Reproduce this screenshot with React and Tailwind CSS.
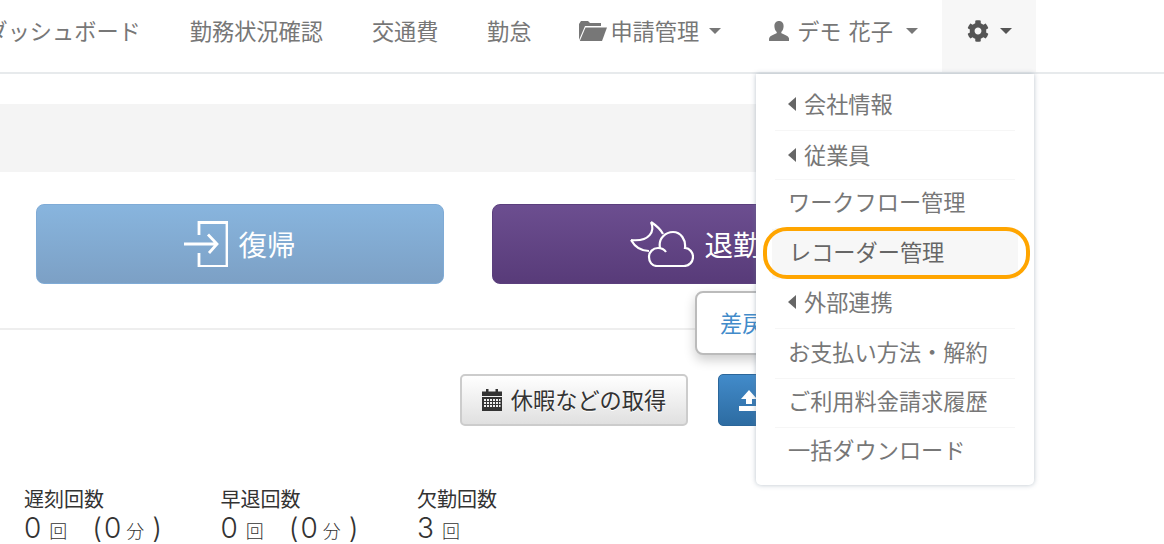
import React from "react";
import { FaCog } from "react-icons/fa";

const font = { fontFamily: '"Noto Sans CJK JP", "Noto Sans", sans-serif' };

const Caret = ({ c = "border-t-[#777]" }) => (
  <span className={`inline-block w-0 h-0 border-x-[6px] border-x-transparent border-t-[6px] ${c}`} />
);
const LeftCaret = () => (
  <span className="inline-block w-0 h-0 border-y-[7px] border-y-transparent border-r-[8px] border-r-[#666] mr-[8px]" />
);

const FolderIcon = () => (
  <svg width="28" height="20" viewBox="0 0 28 20" fill="#777" className="mr-[3px]">
    <path d="M0 19V3l2-3h7l2 2h11v3H6z" />
    <path d="M6.500 6.500H28L23 20H0.800z" />
  </svg>
);

const UserIcon = () => (
  <svg width="20" height="20" viewBox="0 0 20 20" fill="#777">
    <path d="M10 0c3 0 4.600 2.200 4.600 5.200 0 2.200-.9 4.300-2.100 5.500-.4.500-.3 1.500.5 1.900 2.800 1.200 6.200 2.400 6.900 4.300.2.800.2 1.900.1 3.100H.1c-.1-1.200-.1-2.300.1-3.100.7-1.900 4-3.100 6.800-4.300.9-.4 1-1.400.5-1.900C6.300 9.500 5.400 7.400 5.400 5.200 5.400 2.200 7 0 10 0z" />
  </svg>
);

const CalendarIcon = () => (
  <svg width="20" height="22" viewBox="0 0 20 22" fill="#333">
    <path d="M4 0h2.500v3H4zM13.500 0H16v3h-2.500zM0 2.500h20V7H0z" />
    <path fillRule="evenodd" d="M0 8h20v14H0zM2 10v2h2v-2zM5 10v2h2v-2zM8 10v2h2v-2zM11 10v2h2v-2zM14 10v2h2v-2zM17 10v2h1.500v-2zM2 13v2h2v-2zM5 13v2h2v-2zM8 13v2h2v-2zM11 13v2h2v-2zM14 13v2h2v-2zM17 13v2h1.500v-2zM2 16v2h2v-2zM5 16v2h2v-2zM8 16v2h2v-2zM11 16v2h2v-2zM14 16v2h2v-2zM17 16v2h1.500v-2z" />
  </svg>
);

const LoginIcon = () => (
  <svg width="44" height="46" viewBox="0 0 44 46" fill="none" stroke="#fff" strokeWidth="2.800">
    <path d="M15 14V1.500h28v44H15V32" />
    <path d="M0 23h32M24 13.500 33 23l-8 9" />
  </svg>
);

const MoonCloudIcon = () => (
  <svg width="64" height="46" viewBox="0 0 64 46" fill="none" stroke="#fff" strokeWidth="2.200">
    <path d="M21 1C25 10 20 21 1 19M21 1C27 5 31 9 33 13M1 19C5 26 12 30 19 30" />
    <path d="M27 45C22 45 19 41 19 36C19 31 23 27 28 27C31 27 34 28 36 31" />
    <path d="M30 27C28 17 36 11 43 11C51 11 56 19 55 27C60 27 63 32 63 36C63 41 59 45 54 45H27" />
  </svg>
);

const UploadIcon = () => (
  <svg width="20" height="22" viewBox="0 0 20 22" fill="#fff">
    <path d="M10 1 18 10h-5v5H7v-5H2zM0 17h20v5H0z" />
  </svg>
);

const items = [
  { t: "会社情報", sub: true, h: "h-[49px]" },
  { t: "従業員", sub: true, h: "h-[49px]", low: true },
  { t: "ワークフロー管理", h: "h-[49px]" },
  { t: "レコーダー管理", active: true, h: "h-[50px]" },
  { t: "外部連携", sub: true, h: "h-[50px]" },
  { t: "お支払い方法・解約", h: "h-[50px]" },
  { t: "ご利用料金請求履歴", h: "h-[49px]" },
  { t: "一括ダウンロード", h: "h-[48px]", last: true },
];

const Stat = ({ label, n, extra }) => (
  <div className="w-[196.500px] text-[#333]">
    <div className="text-[20px] leading-[28px]">{label}</div>
    <div className="flex items-baseline text-[28px] leading-[31px] font-light font-['Inter',sans-serif]">
      <span>{n}</span>
      <span className="text-[18px] ml-[8px] font-['Noto_Sans_CJK_JP',sans-serif]">回</span>
      {extra && (
        <>
          <span className="ml-[25px]">(</span>
          <span className="ml-[2px]">0</span>
          <span className="text-[18px] ml-[5px] font-['Noto_Sans_CJK_JP',sans-serif]">分</span>
          <span className="ml-[8px]">)</span>
        </>
      )}
    </div>
  </div>
);

export default function App() {
  return (
    <div className="relative w-[1164px] h-[544px] overflow-hidden bg-white" style={font}>
      <nav className="h-[74px] border-b-2 border-[#e7eaec] flex text-[22.200px] text-[#777] whitespace-nowrap ml-[-39px] w-[1203px]">
        <a className="px-[24.500px] flex items-center h-[72px] pb-[10px]">ダッシュボード</a>
        <a className="px-[24.500px] flex items-center h-[72px] pb-[10px]">勤務状況確認</a>
        <a className="px-[24.500px] flex items-center h-[72px] pb-[10px]">交通費</a>
        <a className="px-[24px] flex items-center h-[72px] pb-[10px]">勤怠</a>
        <a className="px-[24px] flex items-center h-[72px] pb-[10px]">
          <FolderIcon />
          申請管理
          <span className="ml-[10px] flex"><Caret /></span>
        </a>
        <a className="px-[24px] flex items-center h-[72px] pb-[10px]">
          <UserIcon />
          <span className="ml-[8px] [word-spacing:2px]">デモ 花子</span>
          <span className="ml-[13px] flex"><Caret /></span>
        </a>
        <a className="pl-[25px] pr-[24px] flex items-center h-[72px] pb-[10px] bg-[#f7f7f7]">
          <FaCog className="w-[22px] h-[22px] text-[#555]" />
          <span className="ml-[11px] flex"><Caret c="border-t-[#555]" /></span>
        </a>
      </nav>

      <div className="w-[1000px]">
        <div className="mt-[30px] h-[68px] bg-[#f4f4f4]" />

        <div className="mt-[32px] pl-[36px] flex gap-[48px]">
          <div className="w-[408px] h-[80px] rounded-[8px] border border-[#7fabd6] bg-gradient-to-b from-[#88b5de] to-[#7ca0c5] flex items-center justify-center text-white text-[28.500px]">
            <LoginIcon />
            <span className="ml-[10px]">復帰</span>
          </div>
          <div className="w-[408px] h-[80px] rounded-[8px] border border-[#5b3f7d] bg-gradient-to-b from-[#6c4e90] to-[#583b79] flex items-center justify-center text-white text-[28.500px]">
            <MoonCloudIcon />
            <span className="ml-[10px]">退勤</span>
          </div>
        </div>

        <div className="mt-[44px] border-t-2 border-[#eeeeee]" />

        <div className="mt-[44px] pl-[460px] flex gap-[30px]">
          <div className="w-[228px] h-[52px] rounded-[5px] border-2 border-[#cccccc] bg-gradient-to-b from-[#ffffff] to-[#e0e0e0] flex items-center justify-center text-[#333] text-[22.200px] [text-shadow:0_1px_0_#fff]">
            <CalendarIcon />
            <span className="ml-[9px]">休暇などの取得</span>
          </div>
          <div className="w-[227px] h-[52px] rounded-[5px] border border-[#2b669a] bg-gradient-to-b from-[#428bca] to-[#2d6ca2] flex items-center pl-[20px]">
            <UploadIcon />
          </div>
        </div>

        <div className="mt-[59px] pl-[24px] flex">
          <Stat label="遅刻回数" n="0" extra />
          <Stat label="早退回数" n="0" extra />
          <Stat label="欠勤回数" n="3" />
        </div>
      </div>

      {/* popover under the dropdown */}
      <div className="absolute left-[695px] top-[291px] w-[200px] h-[64px] rounded-[8px] border-2 border-[#bbbbbb] bg-white shadow-[0_5px_12px_rgba(0,0,0,0.2)] flex items-center pl-[23px] text-[22.200px] text-[#428bca]">
        差戻し
      </div>

      {/* dropdown menu */}
      <div className="absolute left-[756px] top-[74px] w-[278px] h-[411px] bg-white rounded-b-[5px] shadow-[0_0_5px_rgba(100,120,140,0.45)] px-[19px] pt-[8px] text-[22.200px] text-[#777]">
        {items.map((it) => (
          <div
            key={it.t}
            className={`${it.h} flex items-center ${it.low ? "pb-[1px]" : "pb-[4px]"} whitespace-nowrap ${it.last ? "" : "border-b border-[#f6f6f6]"} ${it.active ? "bg-[#f7f7f7] text-[#666] mx-[-3px] pl-[17px] border-transparent" : "pl-[13px]"}`}
          >
            {it.sub && <LeftCaret />}
            {it.t}
          </div>
        ))}
      </div>

      {/* orange highlight */}
      <div className="absolute left-[763px] top-[227px] w-[267px] h-[52px] rounded-[24px] border-[4px] border-[#ffa500]" />
    </div>
  );
}
